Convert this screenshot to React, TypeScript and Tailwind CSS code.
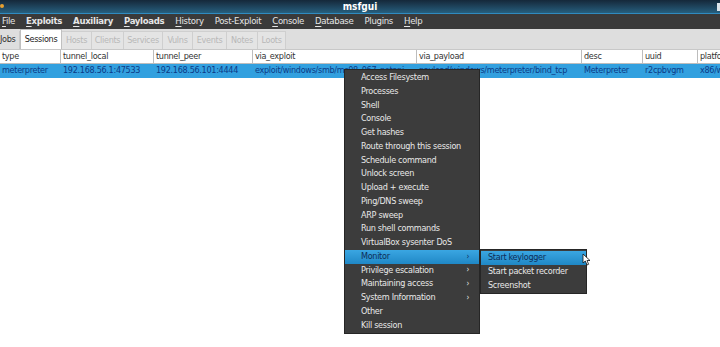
const font = { fontFamily: '"DejaVu Sans Condensed", "DejaVu Sans", sans-serif' };

const menus = [
  { label: 'File', bold: false, u: 'F' },
  { label: 'Exploits', bold: true, u: 'E' },
  { label: 'Auxiliary', bold: true, u: 'A' },
  { label: 'Payloads', bold: true, u: 'P' },
  { label: 'History', bold: false, u: 'H' },
  { label: 'Post-Exploit', bold: false, u: '' },
  { label: 'Console', bold: false, u: 'C' },
  { label: 'Database', bold: false, u: 'D' },
  { label: 'Plugins', bold: false, u: '' },
  { label: 'Help', bold: false, u: 'H' },
];

const tabs = [
  { name: 'Hosts', w: 'w-[30px]' },
  { name: 'Clients', w: 'w-[32px]' },
  { name: 'Services', w: 'w-[39px]' },
  { name: 'Vulns', w: 'w-[30px]' },
  { name: 'Events', w: 'w-[34px]' },
  { name: 'Notes', w: 'w-[31px]' },
  { name: 'Loots', w: 'w-[28px]' },
];

const columns = [
  { name: 'type', w: 'w-[61px]', val: 'meterpreter' },
  { name: 'tunnel_local', w: 'w-[93px]', val: '192.168.56.1:47533' },
  { name: 'tunnel_peer', w: 'w-[99px]', val: '192.168.56.101:4444' },
  { name: 'via_exploit', w: 'w-[164px]', val: 'exploit/windows/smb/ms08_067_netapi' },
  { name: 'via_payload', w: 'w-[165px]', val: 'payload/windows/meterpreter/bind_tcp' },
  { name: 'desc', w: 'w-[61px]', val: 'Meterpreter' },
  { name: 'uuid', w: 'w-[55px]', val: 'r2cpbvgm' },
  { name: 'platform', w: 'w-[60px]', val: 'x86/win32' },
];

const items = [
  'Access Filesystem',
  'Processes',
  'Shell',
  'Console',
  'Get hashes',
  'Route through this session',
  'Schedule command',
  'Unlock screen',
  'Upload + execute',
  'Ping/DNS sweep',
  'ARP sweep',
  'Run shell commands',
  'VirtualBox sysenter DoS',
  'Monitor',
  'Privilege escalation',
  'Maintaining access',
  'System Information',
  'Other',
  'Kill session',
];

const withArrow = ['Monitor', 'Privilege escalation', 'Maintaining access', 'System Information'];

function MenuLabel({ label, u }: { label: string; u: string }) {
  if (!u) return <>{label}</>;
  return (
    <>
      <span className="underline underline-offset-2">{label[0]}</span>
      {label.slice(1)}
    </>
  );
}

export default function App() {
  return (
    <div className="relative w-[720px] h-[347px] overflow-hidden bg-white text-[9px] tracking-[-0.3px]" style={font}>
      {/* title bar */}
      <div className="relative h-[14px] bg-gradient-to-b from-[#15283a] to-[#26607f] border-b border-[#2f8bc0] flex items-center justify-center">
        <span className="absolute left-0 top-[4px] w-[4px] h-[4px] rounded-full bg-[#e8a030]" />
        <span className="font-bold text-white text-[10px] tracking-normal">msfgui</span>
        <span className="absolute right-0 top-[3px] w-[3px] h-[8px] bg-[#dde4ea]" />
      </div>

      {/* menu bar */}
      <div className="h-[15px] bg-[#3a3a3a] flex items-center text-[#e6e6e6] text-[9.5px]">
        <div className="flex gap-[11px] pl-[2px]">
          {menus.map((m) => (
            <span key={m.label} className={m.bold ? 'font-bold' : ''}>
              <MenuLabel label={m.label} u={m.u} />
            </span>
          ))}
        </div>
      </div>

      {/* tab bar */}
      <div className="h-[21px] bg-[#dedede] flex items-end border-b border-[#c8c8c8]">
        <div className="h-[18px] w-[20px] flex items-center text-[#303030] border-r border-[#c8c8c8]">Jobs</div>
        <div className="h-[20px] w-[42px] flex items-center justify-center bg-white text-[#222] border-x border-t border-[#c0c0c0]">Sessions</div>
        {tabs.map((t) => (
          <div key={t.name} className={`${t.w} h-[18px] flex items-center justify-center text-[#b8b8b8] border-r border-t border-[#cfcfcf] bg-[#e4e4e4]`}>
            {t.name}
          </div>
        ))}
      </div>

      {/* table header */}
      <div className="h-[14px] flex bg-[#eeeeee]">
        {columns.map((c) => (
          <div key={c.name} className={`${c.w} shrink-0 h-[14px] bg-white border-r border-b border-[#bdbdbd] px-[2px] flex items-center text-[#333] overflow-hidden whitespace-nowrap`}>
            {c.name}
          </div>
        ))}
      </div>

      {/* selected row */}
      <div className="h-[14px] flex bg-[#32a0df]">
        {columns.map((c) => (
          <div key={c.name} className={`${c.w} shrink-0 h-[14px] px-[2px] flex items-center text-[#0c3a86] overflow-hidden whitespace-nowrap`}>
            {c.val}
          </div>
        ))}
      </div>

      {/* context menu */}
      <div className="absolute left-[344px] top-[69px] w-[136px] bg-[#3c3c3c] border border-[#262626] py-[1px] text-[#e8e8e8]">
        {items.map((it) => {
          const active = it === 'Monitor';
          return (
            <div
              key={it}
              className={`h-[13.75px] flex items-center justify-between pl-[16px] pr-[10px] whitespace-nowrap ${
                active ? 'bg-gradient-to-b from-[#3aa6e2] to-[#1f88c6] text-[#0d2d58]' : ''
              }`}
            >
              <span>{it}</span>
              {withArrow.includes(it) && <span className="text-[8px]">›</span>}
            </div>
          );
        })}
      </div>

      {/* submenu */}
      <div className="absolute left-[480px] top-[249px] w-[107px] bg-[#3c3c3c] border border-[#262626] py-[1px] text-[#e8e8e8]">
        {['Start keylogger', 'Start packet recorder', 'Screenshot'].map((it, i) => (
          <div
            key={it}
            className={`h-[13.75px] flex items-center pl-[7px] whitespace-nowrap ${
              i === 0 ? 'bg-gradient-to-b from-[#3aa6e2] to-[#1f88c6] text-[#0d2d58]' : ''
            }`}
          >
            {it}
          </div>
        ))}
      </div>

      {/* mouse cursor */}
      <svg className="absolute left-[582px] top-[253px]" width="9" height="13" viewBox="0 0 9 13">
        <path d="M1 1 L1 10 L3.3 8 L5 12 L6.6 11.3 L5 7.5 L8 7.5 Z" fill="#ffffff" stroke="#111" strokeWidth="0.8" strokeLinejoin="round" />
      </svg>
    </div>
  );
}
